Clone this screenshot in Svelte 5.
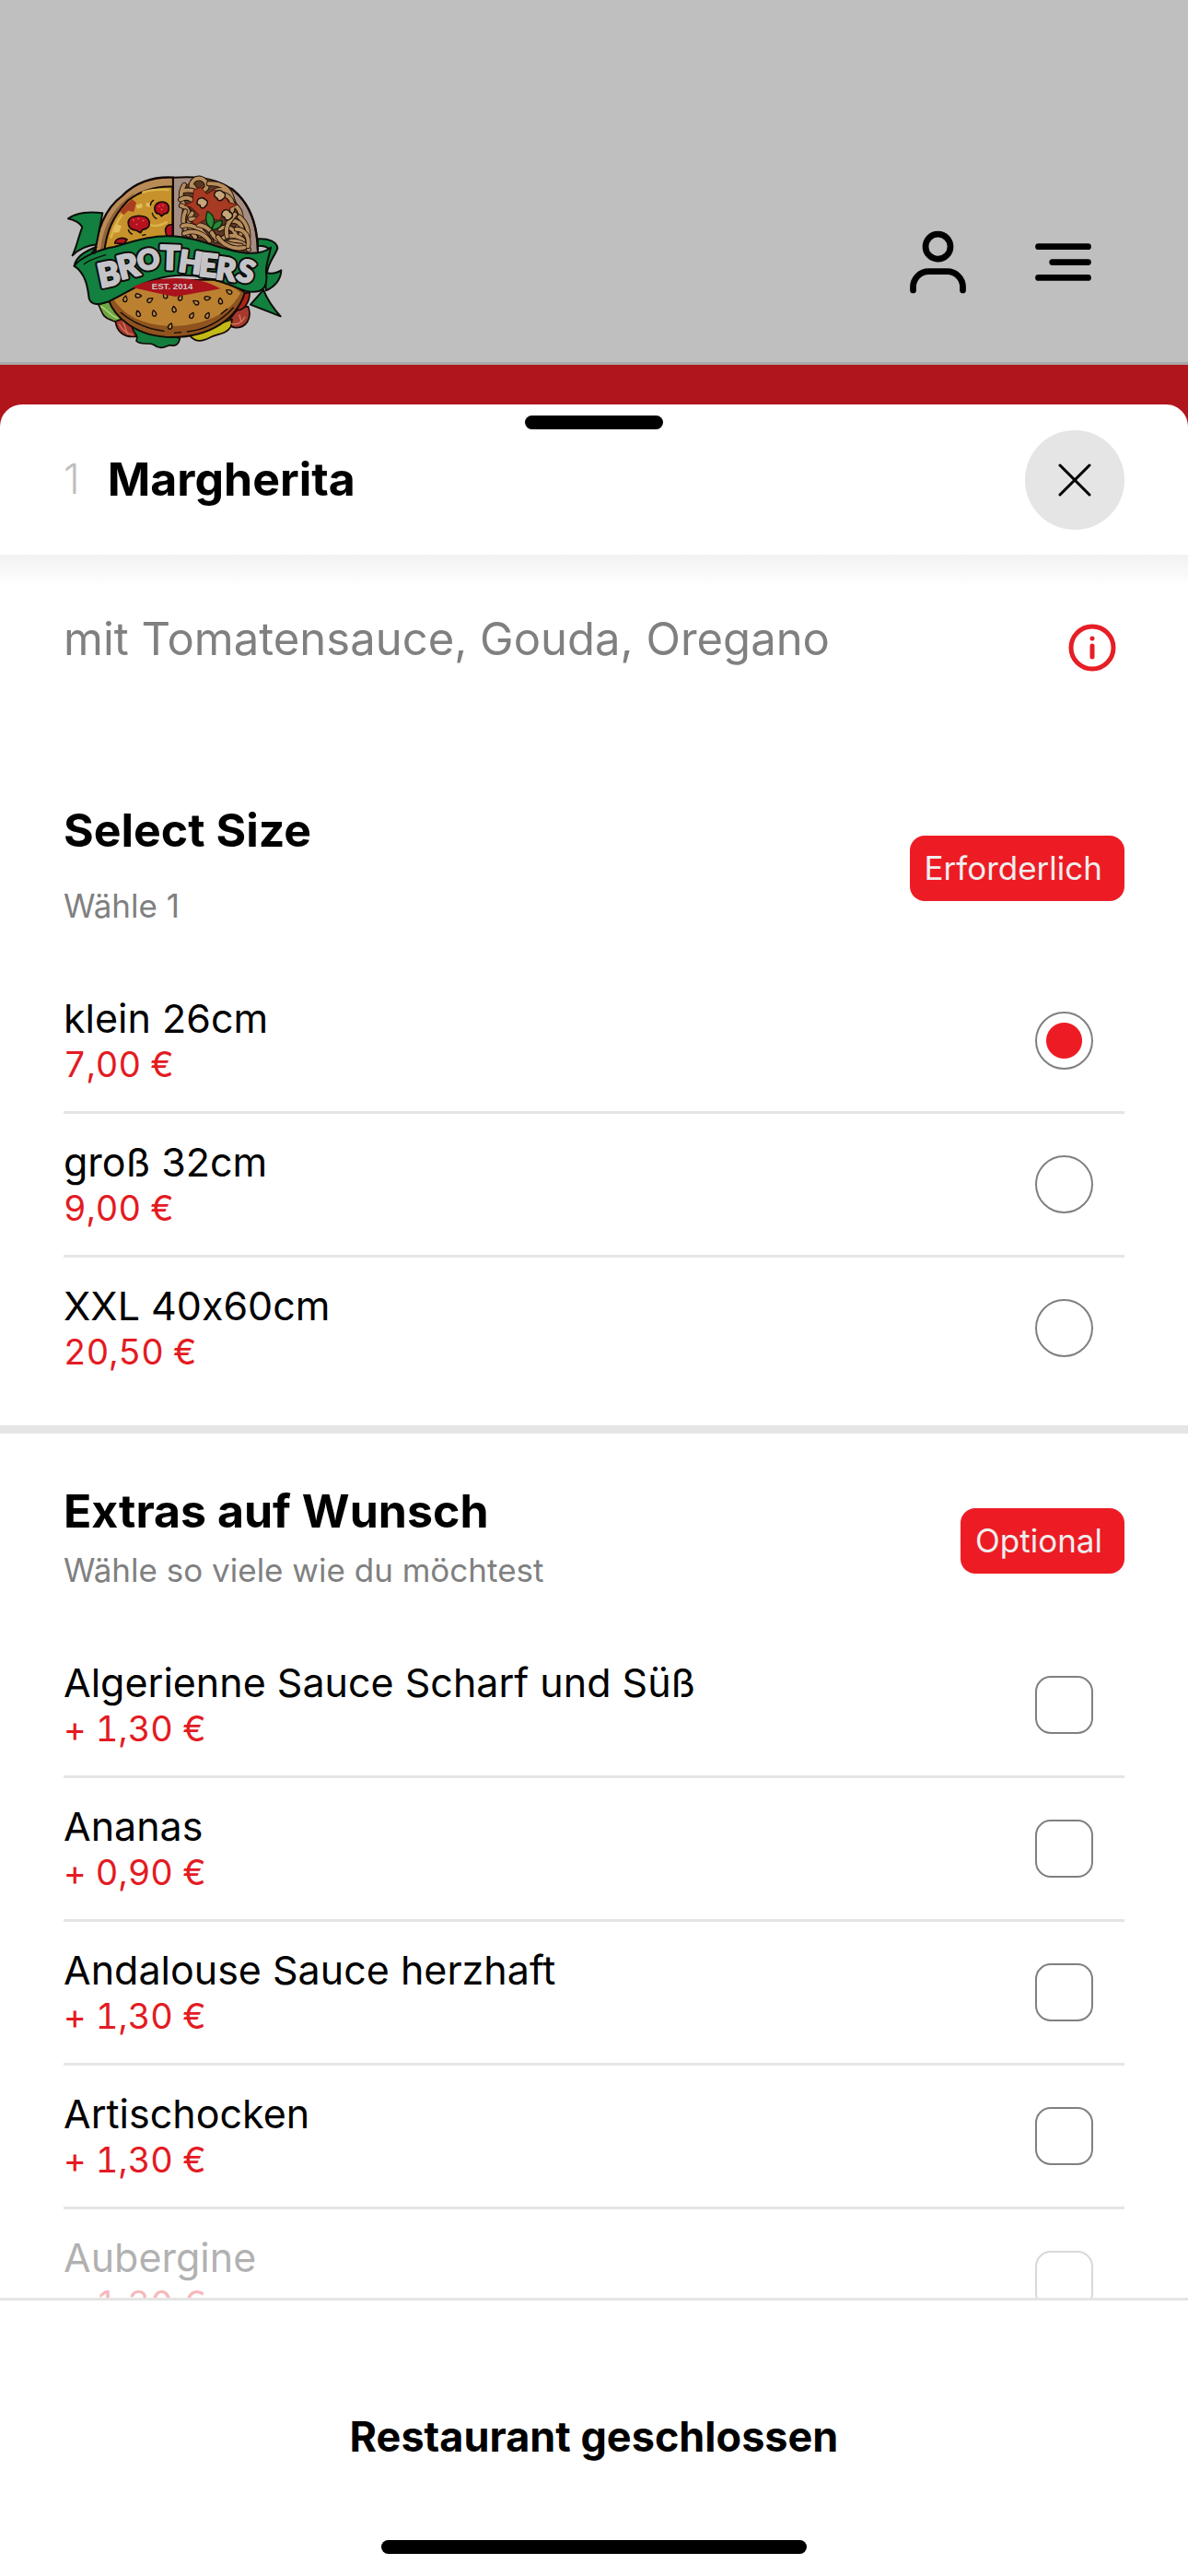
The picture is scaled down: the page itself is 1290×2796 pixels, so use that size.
<script>
    let selectedSize = $state("klein");
    let selectedExtras = $state([]);

    const sizes = [
        { id: "klein", name: "klein 26cm", price: "7,00 €" },
        { id: "gross", name: "groß 32cm", price: "9,00 €" },
        { id: "xxl", name: "XXL 40x60cm", price: "20,50 €" },
    ];

    const extras = [
        { id: "algerienne", name: "Algerienne Sauce Scharf und Süß", price: "+ 1,30 €" },
        { id: "ananas", name: "Ananas", price: "+ 0,90 €" },
        { id: "andalouse", name: "Andalouse Sauce herzhaft", price: "+ 1,30 €" },
        { id: "artischocken", name: "Artischocken", price: "+ 1,30 €" },
        { id: "aubergine", name: "Aubergine", price: "+ 1,30 €", faded: true },
    ];

    // wordmark on the ribbon, every letter sits at its own angle
    const letters = [
        { char: "B", x: 182, y: 420, angle: -12, size: 108 },
        { char: "R", x: 246, y: 393, angle: -14, size: 106 },
        { char: "O", x: 308, y: 366, angle: -9, size: 90 },
        { char: "T", x: 372, y: 367, angle: 2, size: 108 },
        { char: "H", x: 436, y: 378, angle: 8, size: 98 },
        { char: "E", x: 495, y: 391, angle: 6, size: 104 },
        { char: "R", x: 552, y: 402, angle: 8, size: 100 },
        { char: "S", x: 612, y: 407, angle: 16, size: 100 },
    ];

    const seeds = [
        [228, 463, 10], [271, 453, 95], [309, 467, 55], [358, 452, -20], [408, 459, 20],
        [458, 475, -60], [496, 461, 85], [538, 470, -10], [566, 440, -60], [270, 511, -20],
        [322, 510, -15], [387, 497, -10], [445, 517, 30], [496, 517, 25], [375, 552, 20],
    ];

    const noodles = [
        "M445 110c-14-38 34-55 48-22 8 28-34 32-44 8",
        "M420 92c-18 30-10 62 14 84M412 112c30-8 62 2 72 26",
        "M408 140c22-14 46 0 56 26M410 160c22 4 30 26 26 52",
        "M424 178c-12 22-8 46 8 76M446 184c-18 24-12 50 10 78",
        "M440 204c26-8 40 22 32 52M414 226c26-10 62 8 84 42",
        "M466 222c26 4 52 24 58 52M420 250c30-14 64 0 82 24",
        "M520 112c34-14 62 14 58 44M500 88c36-4 64 14 74 40",
        "M546 122c36 10 40 46 20 72M578 154c28 16 36 48 16 76",
        "M560 216c26-18 56 4 46 34-10 24-42 20-46-4",
        "M536 236c20-14 46-4 52 20M540 270c30-24 68-12 84 18",
        "M556 284c24-18 60-6 74 18M600 196c22 18 34 46 26 78",
        "M510 248c14 30 52 38 96 42M586 188c-22 24-34 44-26 72",
        "M590 236c26 0 44 24 38 56M530 262c18 28 54 42 86 34",
    ];

    function close() {
        selectedExtras = [];
    }
</script>

{#snippet option(item)}
    <span class="option-text">
        <span class="option-name">{item.name}</span>
        <span class="option-price">{item.price}</span>
    </span>
{/snippet}

<div class="page">
    <header class="topbar">
        <a href="#home" class="logo" aria-label="Brothers">
            <svg viewBox="30 51 720 585" width="240" height="195" stroke-linejoin="round" stroke-linecap="round">
                <!-- salad, tomato and cheese under the bun -->
                <g stroke="#130907" stroke-width="5">
                    <path fill="#6fa544" d="M140 482c14 22 10 40 42 50 12 8 26 6 38 4l-30-68z" />
                    <path fill="#a6392c" d="M196 536c4 36 30 54 66 50l4-36-34-26z" />
                    <path fill="#a6392c" d="M560 540c14 24 50 22 66-2 10-18 8-36 2-50l-30 4z" />
                    <path fill="#ad2317" d="M590 500c24 2 42-22 44-58l-30 4z" />
                    <path fill="#c4ba16" d="M436 580c20 28 44 22 70 8 22-12 50-8 66-34l4-24-60 20z" />
                    <path fill="#127d3c" d="M250 552c0 22 24 24 14 48 16 16 40 4 56 12 22 18 36 8 52 2 20 4 30-2 34-22l-60-20z" />
                </g>
                <path d="M208 546c10 18 24 30 44 34M222 540l14 38M572 544c18 4 36-2 46-22M600 516l6 22" fill="none" stroke="#cf7a65" stroke-width="4" />
                <path d="M150 488c20 10 26 28 52 38" fill="none" stroke="#a9cf72" stroke-width="5" />

                <!-- bun -->
                <path fill="#8e531f" stroke="#130907" stroke-width="6" d="M172 462c20 64 96 126 210 126 122 0 210-60 236-146l-60-40H240z" />
                <path fill="#bb8130" d="M186 458c34 56 96 92 196 94 110-4 184-40 222-108l-50-40H250z" />
                <path fill="none" stroke="#130907" stroke-width="4" d="M214 508c40 34 88 54 140 60M388 574l22-2M430 570c56-6 110-34 150-78M540 512l20-16" />
                {#each seeds as [x, y, angle]}
                    <path fill="#b98a4a" stroke="#130907" stroke-width="4" transform="translate({x} {y}) rotate({angle})" d="M0-10c8 8 9 19 0 20-9-1-8-12 0-20z" />
                {/each}

                <!-- pizza half -->
                <path fill="#b98b56" stroke="#130907" stroke-width="7" d="M130 330c0-90 36-164 88-202 40-42 100-64 166-60v262z" />
                <path fill="#8f6237" d="M146 320c4-84 40-150 96-190l20-14c-46 44-84 108-92 204z" />
                <path fill="#c7922b" stroke="#130907" stroke-width="6" d="M158 330c6-88 32-138 78-186 38-30 84-48 146-46v232z" />
                <path fill="none" stroke="#dcb24a" stroke-width="8" d="M182 262c10-40 30-70 58-98M286 116c22-8 52-10 82-8M304 220c20 10 40 4 58-6" />
                <path fill="#a93f20" d="M216 170l34-32 14 12-8 30-18-4-16 14-10-10z" />
                <path fill="#e2bd5c" d="M190 238l10-18 16 6-8 20-16 2zM262 158l20-6 2 14-16 4zM296 150l14 2-2 12-12-2z" />
                <g stroke="#130907" stroke-width="5" fill="#b5121e">
                    <path d="M238 210c6-22 60-24 68 0 4 20-8 26-22 28l-6 10-14-8c-18 0-28-12-26-30z" />
                    <path d="M324 168c2-28 46-28 46 0 0 14-6 18-14 18l-10 8-8-8c-10 0-14-8-14-18z" />
                    <path d="M382 222c-16-4-26 10-22 26l4 12h18z" />
                    <path d="M194 282c2-16 26-22 40-12l-10 14z" />
                </g>
                <path fill="none" stroke="#e0616a" stroke-width="4" d="M254 206l2 1M270 202l2 1M286 208l2 1M264 220l2 1M338 162l1 1M350 158l1 1M346 172l1 1" />
                <path fill="none" stroke="#130907" stroke-width="4" d="M238 238q4 12 12 14M310 158q2-12 10-16M316 184q4 14 14 18M284 256l10-2" />

                <!-- pasta half -->
                <path fill="#a48d82" stroke="#130907" stroke-width="6" d="M384 68c60-4 130-4 188 36 56 40 88 106 88 216H384z" />
                <path fill="#5c3821" d="M412 118c14-40 60-60 100-40 70 20 112 110 118 236H412z" />
                {#each noodles as d}
                    <path {d} fill="none" stroke="#130907" stroke-width="17" />
                    <path {d} fill="none" stroke="#b78d5c" stroke-width="12" />
                {/each}
                <path fill="#a63a22" stroke="#5c160c" stroke-width="3" d="M452 108l22-8 20 22 24-14 28 12 20 30 28 6-26 12 4 22-24-4-14 22-28-8-20 6-26 16-14-8 22-24-24-24-24-8 26-10z" />
                <g fill="#c6a57a" stroke="#130907" stroke-width="4">
                    <path d="M462 150c0-16 20-20 26-10 12 2 8 18 2 20-4 12-20 8-18-2-6 0-10-4-10-8z" />
                    <path d="M518 124c2-16 22-18 28-8 12 4 8 18 0 22-6 8-18 6-18-2-6-2-10-6-10-12z" />
                    <path d="M542 188c2-16 20-20 26-8 12 4 12 18 2 22-6 8-20 4-18-4-6-2-10-4-10-10z" />
                </g>
                <path fill="#2b8a3a" stroke="#10280f" stroke-width="4" d="M496 178c24 12 26 38 14 56-18-10-24-32-14-56zM510 238c2-20 16-30 34-30 0 20-12 30-34 30z" />
                <path d="M384 68v222" stroke="#130907" stroke-width="6" />
                <path d="M574 104c52 40 84 104 86 200" fill="none" stroke="#130907" stroke-width="7" />

                <!-- ribbon -->
                <g fill="#12803f" stroke="#0c0c0a" stroke-width="6">
                    <path d="M154 184c-40-6-86-2-112 18 26 6 40 16 46 28-12 28-16 58-32 92 20-20 44-32 78-36z" />
                    <path d="M636 482l98 38c-20-22-40-46-56-86z" />
                    <path d="M684 378c20 4 38 2 52-8 0 28-20 54-50 66z" />
                    <path d="M660 268c34-2 62 8 64 30-8 26-30 44-34 80l-32-60c16-4 34-6 40-14-4-10-20-14-38-14z" />
                    <path d="M62 356c4-26 34-48 72-62l-38 52z" />
                    <path d="M62 356c20-30 90-56 130-62 70-22 140-44 220-32 90 14 130 44 210 52 30 2 62-4 80-18-6 36-20 60-14 92 2 26-6 44-24 50-40 10-74-14-106-24-70-26-148-38-226-16-60 14-120 58-160 74-30 10-54 14-62-10-4-36-10-80-48-106z" />
                </g>
                <path fill="none" stroke="#0c0c0a" stroke-width="4" d="M94 350c16-14 44-22 70-30M132 292l-4 24" />
                <path fill="#a9131c" d="M250 426c60-36 210-46 288 4-50 10-104 18-146 26-48-8-96-20-142-30z" />
                {#each letters as l}
                    <text class="letter outline" text-anchor="middle" font-size={l.size} transform="translate({l.x} {l.y}) rotate({l.angle})" aria-hidden="true">{l.char}</text>
                {/each}
                {#each letters as l}
                    <text class="letter" text-anchor="middle" font-size={l.size} transform="translate({l.x} {l.y}) rotate({l.angle})">{l.char}</text>
                {/each}
                <text class="year" text-anchor="middle" x="381" y="431" font-size="29">EST. 2014</text>
            </svg>
        </a>
        <nav class="actions">
            <button type="button" aria-label="Konto">
                <svg viewBox="0 0 24 24" width="81" height="81" fill="none" stroke="#000" stroke-width="2" stroke-linecap="round">
                    <circle cx="12" cy="7" r="4" />
                    <path d="M4 21v-1a5 5 0 0 1 5-5h6a5 5 0 0 1 5 5v1" />
                </svg>
            </button>
            <button type="button" aria-label="Menü">
                <svg viewBox="0 0 24 24" width="81" height="81" fill="none" stroke="#000" stroke-width="2" stroke-linecap="round">
                    <path d="M4 7h16M8.5 12H20M4 17h16" />
                </svg>
            </button>
        </nav>
    </header>

    <main class="sheet">
        <div class="sheet-head">
            <span class="grabber"></span>
            <h1><span class="number">1</span>Margherita</h1>
            <button type="button" class="close" aria-label="Schließen" onclick={close}>
                <svg viewBox="0 0 36 36" width="36" height="36" fill="none" stroke="#000" stroke-width="3" stroke-linecap="round">
                    <path d="M2 2l32 32M34 2L2 34" />
                </svg>
            </button>
        </div>

        <div class="scroll">
            <div class="description">
                <p>mit Tomatensauce, Gouda, Oregano</p>
                <button type="button" class="info" aria-label="Informationen">
                    <svg viewBox="0 0 72 72" width="72" height="72" fill="none" stroke="#e61e25" stroke-width="5" stroke-linecap="round">
                        <circle cx="36" cy="36" r="23" />
                        <path d="M36 34v12M36 26v0" />
                    </svg>
                </button>
            </div>

            <section>
                <div class="section-head spaced">
                    <div class="titles">
                        <h2>Select Size</h2>
                        <p>Wähle 1</p>
                    </div>
                    <span class="badge">Erforderlich</span>
                </div>
                {#each sizes as size (size.id)}
                    <label class="option">
                        {@render option(size)}
                        <input type="radio" name="size" value={size.id} bind:group={selectedSize} />
                    </label>
                {/each}
            </section>

            <section>
                <div class="section-head">
                    <div class="titles">
                        <h2>Extras auf Wunsch</h2>
                        <p>Wähle so viele wie du möchtest</p>
                    </div>
                    <span class="badge">Optional</span>
                </div>
                {#each extras as extra (extra.id)}
                    <label class="option" class:faded={extra.faded}>
                        {@render option(extra)}
                        <input type="checkbox" value={extra.id} bind:group={selectedExtras} />
                    </label>
                {/each}
            </section>
        </div>

        <footer>
            <button type="button" class="order">Restaurant geschlossen</button>
            <span class="home-indicator"></span>
        </footer>
    </main>
</div>

<style>
    :global(body) {
        margin: 0;
        font-family: Inter, "Liberation Sans", sans-serif;
        font-variant-ligatures: no-contextual;
        color: #000;
    }
    h1, h2, p {
        margin: 0;
    }
    button {
        padding: 0;
        border: none;
        background: none;
        font: inherit;
        color: inherit;
    }
    svg {
        display: block;
    }

    .page {
        height: 100vh;
        display: flex;
        flex-direction: column;
        background: #b0151c;
    }
    .topbar {
        display: flex;
        align-items: center;
        justify-content: space-between;
        padding: 187px 95px 11px 70px;
        background: #bfbfbf;
        border-bottom: 3px solid #a7a7a7;
    }
    .actions {
        display: flex;
        gap: 55px;
    }
    .letter {
        font-family: Lato, Inter, sans-serif;
        font-weight: 900;
        fill: #c4c4c8;
        stroke: #c4c4c8;
        stroke-width: 6px;
    }
    .outline {
        fill: #0c0c0a;
        stroke: #0c0c0a;
        stroke-width: 18px;
    }
    .year {
        font-family: "Liberation Sans", sans-serif;
        font-weight: 700;
        fill: #cfc8c8;
    }

    .sheet {
        flex: 1;
        min-height: 0;
        margin-top: 43px;
        display: flex;
        flex-direction: column;
        background: #fff;
        border-radius: 24px 24px 0 0;
    }
    .sheet-head {
        position: relative;
        display: flex;
        align-items: center;
        justify-content: space-between;
        padding: 28px 69px 27px;
    }
    .grabber {
        position: absolute;
        top: 12px;
        left: 50%;
        width: 150px;
        height: 15px;
        border-radius: 8px;
        background: #000;
        transform: translateX(-50%);
    }
    h1, h2 {
        font-size: 50px;
        line-height: 60px;
        font-weight: 700;
    }
    h1 {
        display: flex;
        gap: 30px;
        padding-bottom: 2px;
    }
    .number {
        font-size: 45px;
        font-weight: 300;
        color: #bfbfbf;
    }
    .close {
        width: 108px;
        height: 108px;
        display: grid;
        place-items: center;
        border-radius: 50%;
        background: #e5e5e5;
    }

    .scroll {
        flex: 1;
        min-height: 0;
        overflow-y: auto;
        scrollbar-width: none;
        background: linear-gradient(#f2f2f2, #fff 34px);
    }
    .description {
        display: flex;
        align-items: flex-start;
        justify-content: space-between;
        padding: 65px 68px 132px 69px;
        font-size: 49px;
        line-height: 54px;
        color: #808080;
    }

    section {
        padding: 0 69px;
    }
    section + section {
        margin-top: 29px;
        padding-top: 54px;
        border-top: 9px solid #e5e5e5;
    }
    .section-head {
        display: flex;
        align-items: center;
        justify-content: space-between;
        padding-bottom: 40px;
    }
    .titles {
        display: grid;
        gap: 4px;
    }
    .titles p {
        font-size: 35px;
        line-height: 60px;
        color: #808080;
    }
    .spaced .titles {
        gap: 22px;
    }
    .badge {
        padding: 0 24px 0 16px;
        border-radius: 16px;
        background: #ed1c24;
        font-size: 35px;
        line-height: 71px;
        color: #eee;
    }

    .option {
        display: flex;
        align-items: center;
        justify-content: space-between;
        height: 153px;
        padding-right: 34px;
    }
    .option + .option {
        border-top: 3px solid #e5e5e5;
    }
    .option-text {
        display: grid;
        padding-bottom: 2px;
    }
    .option-name {
        font-size: 43px;
        line-height: 52px;
    }
    .option-price {
        font-size: 38px;
        line-height: 48px;
        font-variant-numeric: tabular-nums;
        color: #e31b23;
    }
    .faded > * {
        opacity: 0.3;
    }
    input {
        appearance: none;
        box-sizing: border-box;
        width: 63px;
        height: 63px;
        margin: 0;
        border: 2px solid #808080;
        background: #fff;
    }
    input[type="radio"] {
        border-radius: 50%;
    }
    input[type="checkbox"] {
        border-radius: 17px;
    }
    input[type="radio"]:checked {
        background: radial-gradient(circle, #ed1c24 19px, #fff 20px);
    }
    input[type="checkbox"]:checked {
        background: #ed1c24;
    }

    footer {
        display: flex;
        flex-direction: column;
        align-items: center;
        gap: 82px;
        padding: 118px 69px 24px;
        border-top: 3px solid #e5e5e5;
    }
    .order {
        font-size: 45px;
        line-height: 60px;
        font-weight: 700;
    }
    .home-indicator {
        width: 462px;
        height: 15px;
        border-radius: 8px;
        background: #000;
    }
</style>
